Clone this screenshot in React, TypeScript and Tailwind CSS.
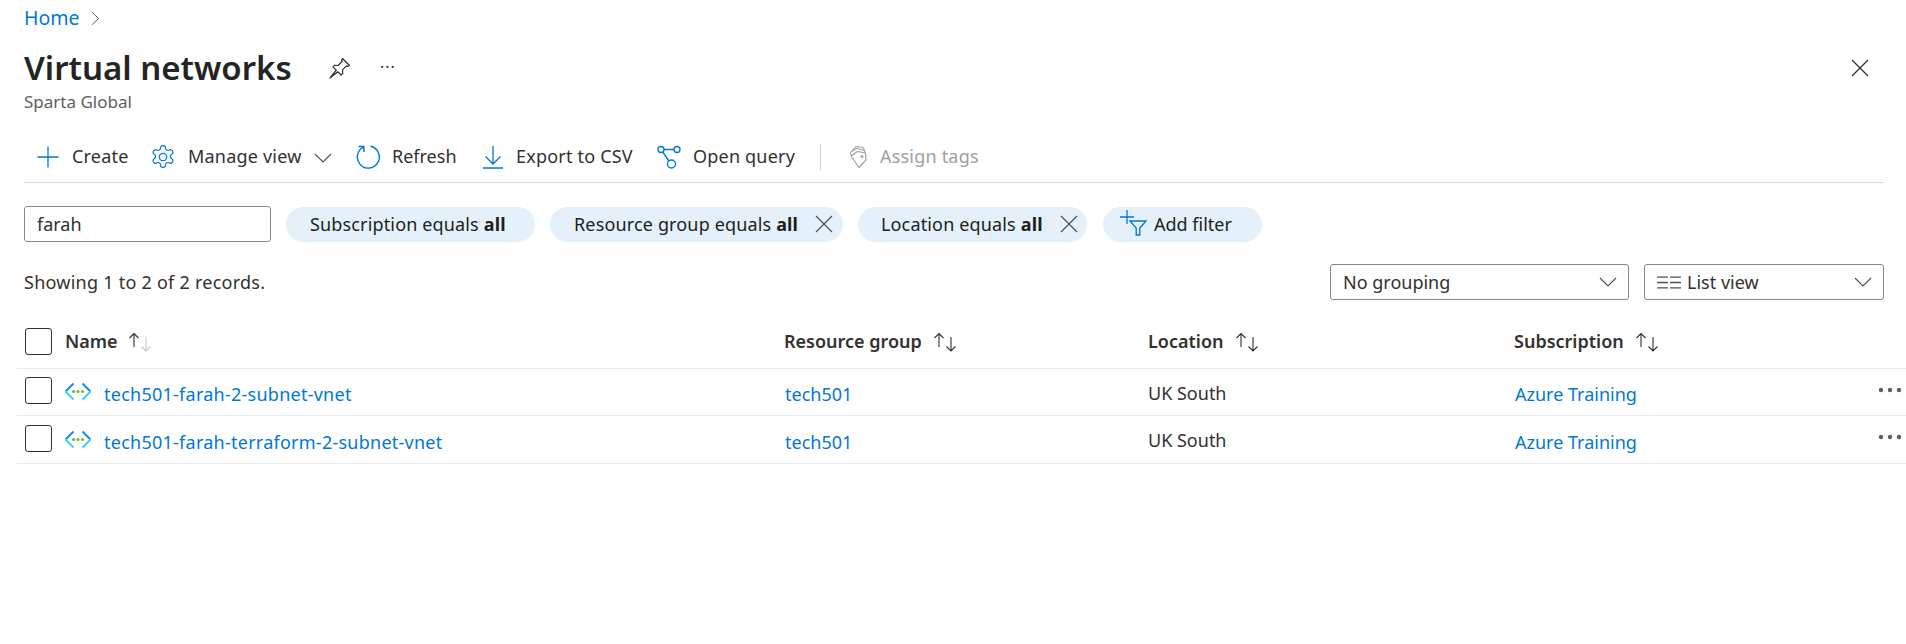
import React from "react";

const Chevron = ({ className = "" }: { className?: string }) => (
  <svg viewBox="0 0 18 10" className={className} fill="none" stroke="#505050" strokeWidth="1.1">
    <path d="M1 1l8 8 8-8" />
  </svg>
);

const X = () => (
  <svg viewBox="0 0 18 18" className="w-[18px] h-[18px]" fill="none" stroke="#505050" strokeWidth="1.2">
    <path d="M1 1l16 16M17 1L1 17" />
  </svg>
);

const Sort = ({ muted = false }: { muted?: boolean }) => (
  <svg viewBox="0 0 26 20" className="w-[26px] h-[20px]" fill="none" strokeWidth="1.1">
    <path d="M6 15V1.5M1.5 6L6 1.5 10.5 6" stroke="#323130" />
    <path d="M18 5v14M13.5 14.5L18 19l4.5-4.5" stroke={muted ? "#c8c8c8" : "#323130"} />
  </svg>
);

const Box = () => <div className="w-[27px] h-[27px] rounded-[3px] border border-[#323130] bg-white shrink-0 mb-[3px]" />;

const Vnet = () => (
  <svg viewBox="0 0 28 20" className="w-[28px] h-[20px] shrink-0 block mt-[1px] mb-[1px]" fill="none">
    <path d="M9.5 1.5L1.5 9.5" stroke="#1e8fe6" strokeWidth="2.200" />
    <path d="M1.5 9.5l8 8" stroke="#3fd3f5" strokeWidth="2.200" />
    <path d="M18.5 1.5l8 8" stroke="#1e8fe6" strokeWidth="2.200" />
    <path d="M26.5 9.5l-8 8" stroke="#3fd3f5" strokeWidth="2.200" />
    <circle cx="9.5" cy="9.5" r="1.6" fill="#7ab929" />
    <circle cx="14" cy="9.5" r="1.6" fill="#7ab929" />
    <circle cx="18.5" cy="9.5" r="1.6" fill="#7ab929" />
  </svg>
);

const Plus = () => (
  <svg viewBox="0 0 24 24" className="w-[24px] h-[24px]" fill="none" stroke="#0078d4" strokeWidth="1.3">
    <path d="M12 1.5v21M1.5 12h21" />
  </svg>
);

const Gear = () => (
  <svg viewBox="1.500 1 21 22" className="w-[24px] h-[24px]" fill="none" stroke="#0078d4" strokeWidth="1.1">
    <path d="M12.22 1.5h-.44a2 2 0 0 0-2 2v.18a2 2 0 0 1-1 1.73l-.43.25a2 2 0 0 1-2 0l-.15-.08a2 2 0 0 0-2.73.73l-.22.38a2 2 0 0 0 .73 2.73l.15.1a2 2 0 0 1 1 1.72v.51a2 2 0 0 1-1 1.74l-.15.09a2 2 0 0 0-.73 2.73l.22.38a2 2 0 0 0 2.73.73l.15-.08a2 2 0 0 1 2 0l.43.25a2 2 0 0 1 1 1.73v.18a2 2 0 0 0 2 2h.44a2 2 0 0 0 2-2v-.18a2 2 0 0 1 1-1.73l.43-.25a2 2 0 0 1 2 0l.15.08a2 2 0 0 0 2.73-.73l.22-.39a2 2 0 0 0-.73-2.73l-.15-.08a2 2 0 0 1-1-1.74v-.5a2 2 0 0 1 1-1.74l.15-.09a2 2 0 0 0 .73-2.73l-.22-.38a2 2 0 0 0-2.73-.73l-.15.08a2 2 0 0 1-2 0l-.43-.25a2 2 0 0 1-1-1.73V3.5a2 2 0 0 0-2-2z" />
    <circle cx="12" cy="12" r="3.4" />
  </svg>
);

const Refresh = () => (
  <svg viewBox="0 0 24 24" className="w-[24px] h-[24px]" fill="none" stroke="#0078d4" strokeWidth="1.4">
    <path d="M7.5 2.2A11 11 0 1 0 14.5 1.3" />
    <path d="M2.5 1.5h5.4v5.4" />
  </svg>
);

const Download = () => (
  <svg viewBox="0 0 22 24" className="w-[22px] h-[24px]" fill="none" stroke="#0078d4" strokeWidth="1.3">
    <path d="M11 1v18M3.5 11.5L11 19l7.5-7.5M1 23h20" />
  </svg>
);

const Query = () => (
  <svg viewBox="0 0 24 24" className="w-[24px] h-[24px]" fill="none" stroke="#0078d4" strokeWidth="1.4">
    <circle cx="4" cy="4.5" r="3" />
    <circle cx="20" cy="4.5" r="3" />
    <circle cx="14.5" cy="19" r="4" />
    <path d="M7 4.5h10M5.8 7l6 9" />
  </svg>
);

const Tags = () => (
  <svg viewBox="0 0 20 24" className="w-[20px] h-[24px]" fill="none" stroke="#a19f9d" strokeWidth="1.1" strokeLinejoin="round">
    <path d="M2 8l6-6.500 7 1 1.500 2.500" />
    <path d="M2 8l1.500 2M3 6.500L9 3.500l7.500 2 .5 2.500" />
    <path d="M3 11l6.500-4.500 8 1.500.5 7-7 7.500z" />
    <circle cx="14" cy="11.500" r="1" />
  </svg>
);

const Pin = () => (
  <svg viewBox="0 0 22 22" className="w-[22px] h-[22px]" fill="none" stroke="#323130" strokeWidth="1.2" strokeLinejoin="round">
    <path d="M13.5 1.5l7 7-2 1-1-.6-4 4 .2 3.6-1.6 1.5-3.3-3.3L1 21l6.300-7.800-3.300-3.300 1.500-1.600 3.600.2 4-4-.6-1z" />
  </svg>
);

const AddFilter = () => (
  <svg viewBox="0 0 28 26" className="w-[28px] h-[26px]" fill="none" stroke="#0078d4" strokeWidth="1.3">
    <path d="M1 7h14M8 0v14" />
    <path d="M11 11h16l-6.200 7v7h-3.600v-7z" />
  </svg>
);

const Tool = ({ icon, label, className = "", disabled = false }: { icon: React.ReactNode; label: string; className?: string; disabled?: boolean }) => (
  <div className={`flex items-center gap-[12px] ${className}`}>
    {icon}
    <span className={`${disabled ? "text-[#a19f9d]" : "text-[#323130]"} mt-[-1px]`}>{label}</span>
  </div>
);

const Pill = ({ a, x, className = "", xClass = "mr-[10px]" }: { a: string; x?: boolean; className?: string; xClass?: string }) => (
  <div className={`h-[35px] rounded-full bg-[#e4f0fa] flex items-center text-[#201f1e] tracking-[0.15px] ${className}`}>
    <span>
      {a} <b className="font-bold">all</b>
    </span>
    {x && <span className={`ml-auto ${xClass}`}><X /></span>}
  </div>
);

const grid = "grid grid-cols-[767px_364px_366px_1fr]";

const Row = ({ name, border }: { name: string; border: string }) => (
  <div className={`${grid} ${border} border-b border-[#edebe9] items-center`}>
    <div className="flex items-center pl-[8px]">
      <Box />
      <span className="ml-[12px]"><Vnet /></span>
      <a className="ml-[12px] text-[#0078d4] tracking-[0.25px] mt-[5px]">{name}</a>
    </div>
    <a className="text-[#0078d4] pl-[1px] mt-[5px]">tech501</a>
    <span className="text-[#323130] mt-[2px]">UK South</span>
    <div className="flex justify-between items-center mt-[5px]">
      <a className="text-[#0078d4] pl-[1px]">Azure Training</a>
      <svg viewBox="0 0 24 6" className="w-[24px] h-[6px] mb-[10px] mr-[4px] shrink-0" fill="#605e5c">
        <circle cx="3" cy="3" r="2.2" />
        <circle cx="12" cy="3" r="2.2" />
        <circle cx="21" cy="3" r="2.2" />
      </svg>
    </div>
  </div>
);

export default function App() {
  return (
    <div className="w-[1906px] h-[644px] bg-white overflow-hidden font-['Noto_Sans','Open_Sans',sans-serif] text-[18px]">
      <div className="pl-[24px] pt-[5px] pr-[22px]">
        <div className="flex items-center h-[26px] gap-[12px]">
          <a className="text-[#0078d4] text-[19.500px] leading-[26px]">Home</a>
          <svg viewBox="0 0 10 16" className="w-[9px] h-[15px]" fill="none" stroke="#605e5c" strokeWidth="1.1">
            <path d="M1 1l7.500 7L1 15" />
          </svg>
        </div>
        <div className="flex items-center h-[44px] mt-[15px]">
          <h1 className="text-[33px] font-semibold text-[#242424] leading-[44px] w-[305px]">Virtual networks</h1>
          <span className="w-[22px]"><Pin /></span>
          <span className="ml-[29px] text-[#323130] text-[16px] leading-[16px] mb-[2px] tracking-[1px]">···</span>
          <svg viewBox="0 0 18 18" className="w-[18px] h-[18px] ml-auto mr-[15px]" fill="none" stroke="#323130" strokeWidth="1.300">
            <path d="M1 1l16 16M17 1L1 17" />
          </svg>
        </div>
        <div className="text-[#605e5c] text-[17px] leading-[22px] mt-[1px]">Sparta Global</div>

        <div className="flex items-center h-[60px] mt-[10px] border-b border-[#d8d8d8] pt-[9px] pl-[12px] tracking-[0.2px]">
          <Tool icon={<Plus />} label="Create" className="w-[115px]" />
          <Tool icon={<Gear />} label="Manage view" className="w-[163px] [&>span]:ml-[1px]" />
          <Chevron className="w-[18px] h-[10px] mt-[2px]" />
          <Tool icon={<Refresh />} label="Refresh" className="ml-[24px] w-[126px] [&>span]:tracking-[0px]" />
          <Tool icon={<Download />} label="Export to CSV" className="w-[175px]" />
          <Tool icon={<Query />} label="Open query" className="w-[163px]" />
          <div className="w-px h-[26px] bg-[#d2d0ce]" />
          <Tool icon={<Tags />} label="Assign tags" className="ml-[27px]" disabled />
        </div>

        <div className="flex items-center mt-[23px]">
          <div className="w-[247px] h-[36px] border border-[#8a8886] rounded-[3px] flex items-center pl-[12px] text-[#323130]">farah</div>
          <Pill a="Subscription equals" className="ml-[15px] w-[249px] pl-[24px]" />
          <Pill a="Resource group equals" x className="ml-[15px] w-[293px] pl-[24px]" />
          <Pill a="Location equals" x xClass="mr-[9px]" className="ml-[15px] w-[229px] pl-[23px]" />
          <div className="ml-[16px] w-[159px] h-[35px] rounded-full bg-[#e4f0fa] flex items-center pl-[16px] gap-[7px] text-[#201f1e]">
            <span className="mb-[3px]"><AddFilter /></span>
            <span>Add filter</span>
          </div>
        </div>

        <div className="flex items-center mt-[22px] h-[36px]">
          <span className="text-[#323130] tracking-[0.25px] mt-[1px]">Showing 1 to 2 of 2 records.</span>
          <div className="ml-auto flex gap-[15px]">
            <div className="w-[299px] h-[36px] border border-[#8a8886] rounded-[3px] flex items-center justify-between pl-[12px] pr-[11px] text-[#323130]">
              <span>No grouping</span>
              <Chevron className="w-[18px] h-[10px]" />
            </div>
            <div className="w-[240px] h-[36px] border border-[#8a8886] rounded-[3px] flex items-center justify-between pl-[12px] pr-[11px] text-[#323130]">
              <span className="flex items-center gap-[6px]">
                <svg viewBox="0 0 22 12" className="w-[24px] h-[13px]" fill="none" stroke="#505050" strokeWidth="1.2">
                  <path d="M0 1h10M0 6h10M0 11h10M12 1h10M12 6h10M12 11h10" />
                </svg>
                List view
              </span>
              <Chevron className="w-[18px] h-[10px]" />
            </div>
          </div>
        </div>
      </div>

      <div className="pl-[17px] mt-[21px]">
        <div className={`${grid} h-[48px] pb-[6px] border-b border-[#edebe9] items-center font-semibold text-[#323130]`}>
          <div className="flex items-center pl-[8px]">
            <div className="w-[27px] h-[27px] rounded-[3px] border border-[#323130] bg-white shrink-0" />
            <span className="ml-[13px]">Name</span>
            <span className="ml-[10px]"><Sort muted /></span>
          </div>
          <div className="flex items-center gap-[11px]">Resource group <Sort /></div>
          <div className="flex items-center gap-[11px]">Location <Sort /></div>
          <div className="flex items-center gap-[11px]">Subscription <Sort /></div>
        </div>
        <Row name="tech501-farah-2-subnet-vnet" border="h-[47px]" />
        <Row name="tech501-farah-terraform-2-subnet-vnet" border="h-[48px]" />
      </div>
    </div>
  );
}
